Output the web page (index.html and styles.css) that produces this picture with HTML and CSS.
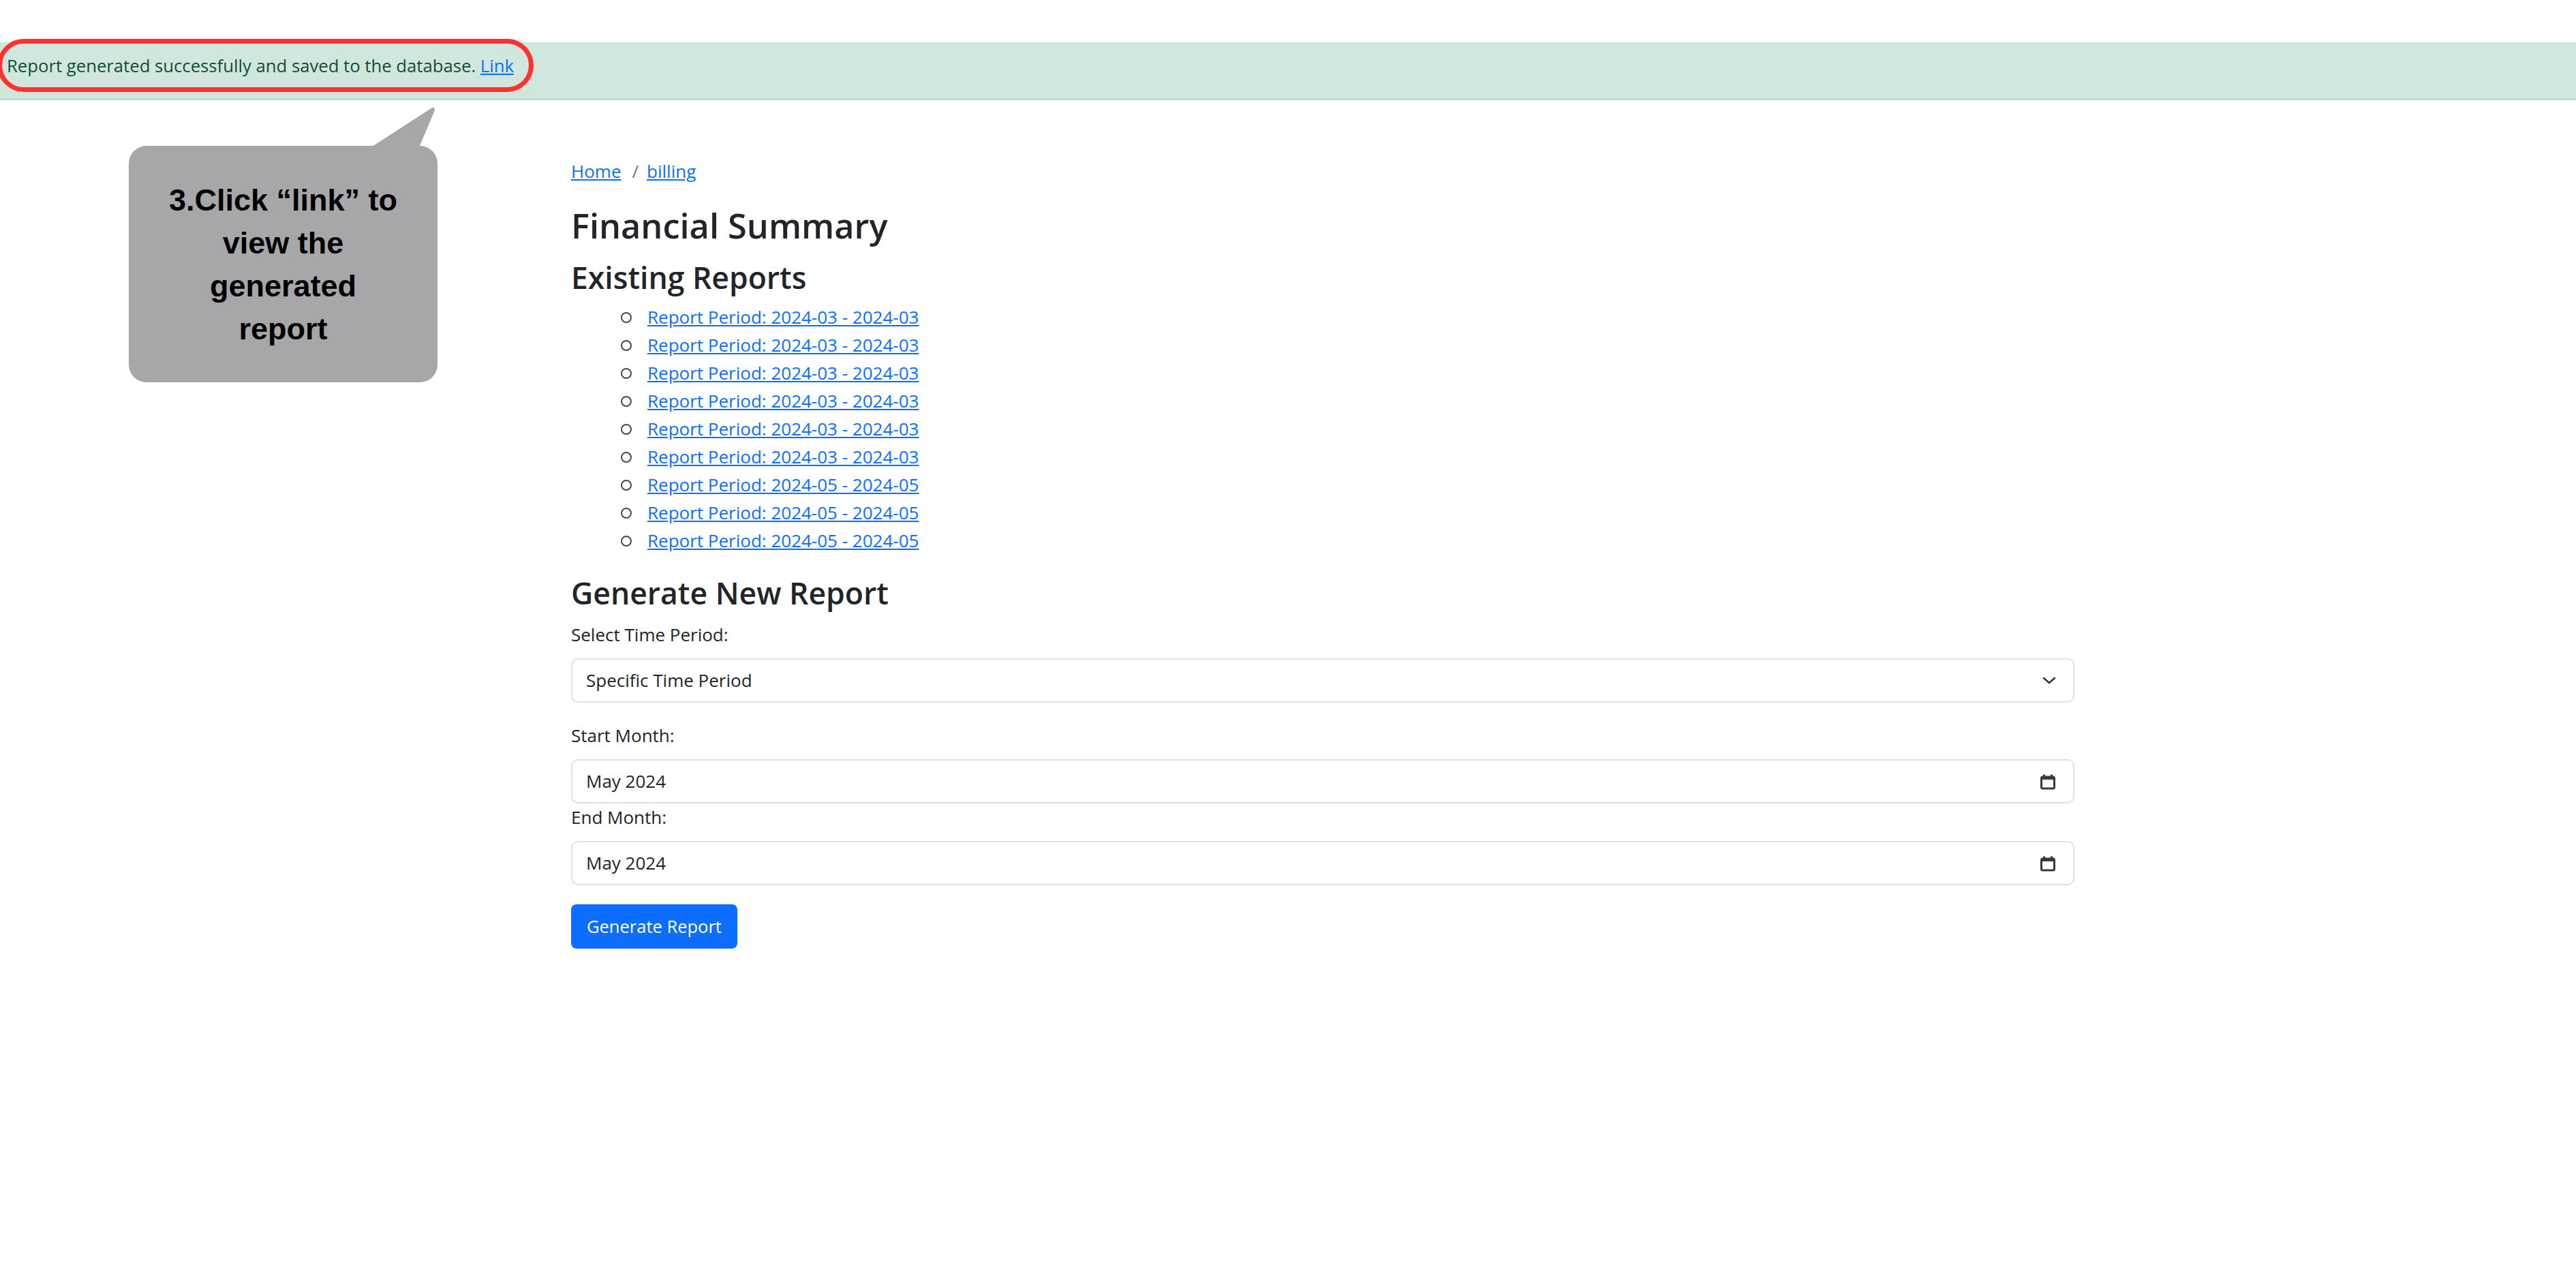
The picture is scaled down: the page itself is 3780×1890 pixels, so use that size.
FILE: index.html
```html
<!DOCTYPE html>
<html lang="en">
<head>
<meta charset="utf-8">
<title>Financial Summary</title>
<link rel="stylesheet" href="styles.css">
</head>
<body>
<div class="alert">Report generated successfully and saved to the database. <a href="#">Link</a></div>

<main class="container">
  <nav class="breadcrumb"><a href="#">Home</a><span class="sep">/</span><a href="#">billing</a></nav>
  <h1 class="title">Financial Summary</h1>
  <h2 class="subtitle">Existing Reports</h2>
  <ul class="reports">
    <li><a href="#">Report Period: 2024-03 - 2024-03</a></li>
    <li><a href="#">Report Period: 2024-03 - 2024-03</a></li>
    <li><a href="#">Report Period: 2024-03 - 2024-03</a></li>
    <li><a href="#">Report Period: 2024-03 - 2024-03</a></li>
    <li><a href="#">Report Period: 2024-03 - 2024-03</a></li>
    <li><a href="#">Report Period: 2024-03 - 2024-03</a></li>
    <li><a href="#">Report Period: 2024-05 - 2024-05</a></li>
    <li><a href="#">Report Period: 2024-05 - 2024-05</a></li>
    <li><a href="#">Report Period: 2024-05 - 2024-05</a></li>
  </ul>
  <h2 class="subtitle subtitle-form">Generate New Report</h2>
  <form class="form">
    <div class="group">
      <label class="label">Select Time Period:</label>
      <div class="field">
        <span>Specific Time Period</span>
        <svg class="chevron" width="20" height="11" viewBox="0 0 20 11"><path d="M2 2 L10 9 L18 2" fill="none" stroke="#343a40" stroke-width="2.6" stroke-linecap="round" stroke-linejoin="round"/></svg>
      </div>
    </div>
    <div class="group">
      <label class="label">Start Month:</label>
      <div class="field">
        <span>May 2024</span>
        <svg class="cal" width="24" height="24" viewBox="0 0 24 24"><rect x="2.5" y="5" width="19" height="17" rx="2" fill="none" stroke="#3a3a3a" stroke-width="3"/><rect x="2" y="4" width="20" height="5" fill="#3a3a3a"/><rect x="5" y="1.5" width="3" height="4" fill="#3a3a3a"/><rect x="16" y="1.5" width="3" height="4" fill="#3a3a3a"/></svg>
      </div>
      <label class="label">End Month:</label>
      <div class="field">
        <span>May 2024</span>
        <svg class="cal" width="24" height="24" viewBox="0 0 24 24"><rect x="2.5" y="5" width="19" height="17" rx="2" fill="none" stroke="#3a3a3a" stroke-width="3"/><rect x="2" y="4" width="20" height="5" fill="#3a3a3a"/><rect x="5" y="1.5" width="3" height="4" fill="#3a3a3a"/><rect x="16" y="1.5" width="3" height="4" fill="#3a3a3a"/></svg>
      </div>
    </div>
    <button type="button" class="btn">Generate Report</button>
  </form>
</main>

<div class="ring"></div>

<div class="callout">
  <svg class="tail" width="120" height="66" viewBox="0 0 120 66"><polygon points="18,66 106,9 82,66" fill="#a7a7a9" stroke="#a7a7a9" stroke-width="6" stroke-linejoin="round"/></svg>
  <p class="callout-text">3.Click “link” to<br>view the<br>generated<br>report</p>
</div>
</body>
</html>
```

FILE: styles.css
```css
* { box-sizing: border-box; }

html, body {
  margin: 0;
  padding: 0;
}

body {
  position: relative;
  width: 3780px;
  height: 1890px;
  overflow: hidden;
  background: #ffffff;
  color: #212529;
  font-family: "Open Sans", "Noto Sans", sans-serif;
}

a {
  color: #0d6efd;
  text-decoration: underline;
}

.alert {
  margin-top: 62px;
  height: 85px;
  padding: 17px 10px 0;
  background: #d1e7dd;
  border-bottom: 2px solid #badbcc;
  color: #0f5132;
  font-size: 25.7px;
  line-height: 36px;
}

.container {
  margin-left: 838px;
  width: 2206px;
  padding-top: 84px;
  font-size: 26px;
  line-height: 41px;
}

.breadcrumb {
  display: flex;
  margin-bottom: 28px;
}

.breadcrumb .sep {
  color: #6c757d;
  padding: 0 12px 0 16px;
}

.title {
  margin: 0 0 17px;
  font-size: 50.5px;
  line-height: 62px;
  font-weight: 600;
}

.subtitle {
  margin: 0 0 11px;
  font-size: 44.5px;
  line-height: 55px;
  font-weight: 600;
}

.subtitle-form {
  margin-bottom: 14px;
}

.reports {
  list-style: none;
  margin: 0 0 28px;
  padding: 0 0 0 73px;
}

.reports li {
  display: flex;
  align-items: center;
  height: 41px;
}

.reports li::before {
  content: "";
  flex: none;
  width: 12px;
  height: 12px;
  margin-right: 23px;
  border: 2.5px solid #4a4a4a;
  border-radius: 50%;
}

.form {
  display: flex;
  flex-direction: column;
  align-items: flex-start;
}

.group {
  width: 100%;
  margin-bottom: 28px;
}

.label {
  display: block;
  margin-bottom: 14px;
}

.field {
  display: flex;
  align-items: center;
  justify-content: space-between;
  width: 100%;
  height: 65px;
  padding: 0 25px 0 20px;
  border: 2px solid #dee2e6;
  border-radius: 10px;
  background: #fff;
}

.chevron, .cal {
  flex: none;
}

.btn {
  height: 65px;
  padding: 0 23px;
  border: 0;
  border-radius: 8px;
  background: #0d6efd;
  color: #fff;
  font-family: inherit;
  font-size: 25.5px;
  line-height: 41px;
}

.ring {
  position: absolute;
  left: -4px;
  top: 57px;
  width: 787px;
  height: 78px;
  border: 7px solid #ff3131;
  border-radius: 39px;
}

.callout {
  position: absolute;
  left: 189px;
  top: 214px;
  width: 453px;
  height: 347px;
  display: flex;
  align-items: center;
  justify-content: center;
  background: #a7a7a9;
  border-radius: 26px;
}

.tail {
  position: absolute;
  left: 340px;
  top: -62px;
}

.callout-text {
  margin: 0;
  text-align: center;
  color: #000;
  font-family: "Liberation Sans", Arial, sans-serif;
  font-weight: 700;
  font-size: 45px;
  line-height: 63px;
}
```
